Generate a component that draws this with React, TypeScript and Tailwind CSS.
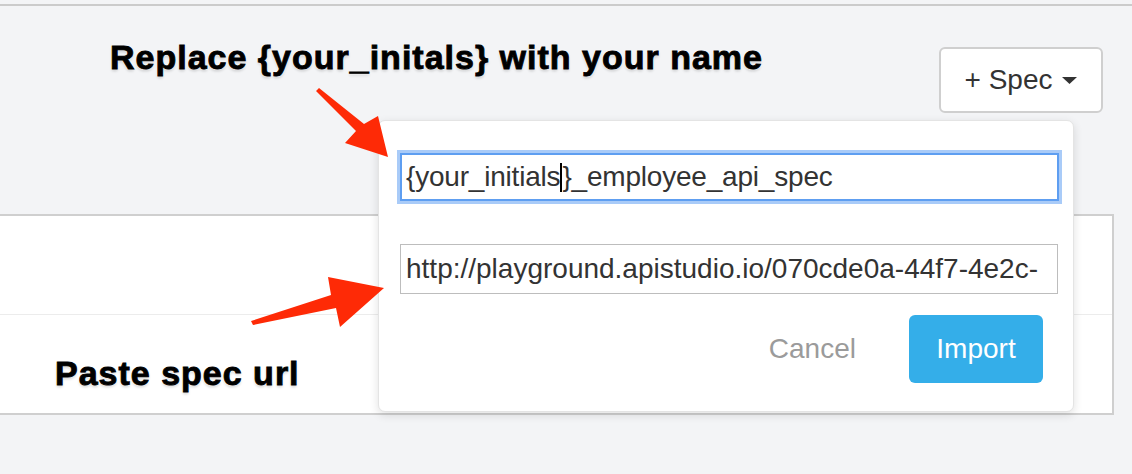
import React from "react";

export default function App() {
  return (
    <div className="relative w-[1132px] h-[474px] overflow-hidden bg-[#f3f4f6] font-['Liberation_Sans',Arial,sans-serif]">
      <div className="h-[4px]" />
      <div className="h-[2px] bg-[#cbcbcb]" />
      <div className="flex justify-end pt-[41px] pr-[29px]">
        <button className="flex h-[66px] w-[164px] items-center justify-center gap-[10px] rounded-[6px] border-2 border-[#cfcfcf] bg-white text-[28px] text-[#333]">
          <span>+ Spec</span>
          <svg width="15" height="8" viewBox="0 0 15 8" className="mt-[1px]">
            <polygon points="0,0 15,0 7.5,7" fill="#333" />
          </svg>
        </button>
      </div>
      <div className="mt-[101px] w-[1114px] border-y-2 border-r-2 border-[#cfcfcf] bg-white">
        <div className="h-[99px] border-b border-[#ececec]" />
        <div className="h-[98px]" />
      </div>

      {/* Popover */}
      <div className="absolute left-[378px] top-[120px] flex h-[292px] w-[696px] flex-col rounded-[7px] border border-[#e4e4e4] bg-white pl-[21px] pr-[16px] pt-[32px] shadow-[0_3px_10px_rgba(0,0,0,0.12)]">
        <div className="flex h-[48px] w-[659px] items-center whitespace-nowrap border-2 border-[#5e9ef1] pl-[4px] text-[28px] tracking-[-0.2px] text-[#333] ring-[3px] ring-[#a9cbf8]">
          <span>{"{your_initials"}</span>
          <span className="inline-block h-[29px] w-[2px] bg-black" />
          <span>{"}_employee_api_spec"}</span>
        </div>
        <div className="mt-[43px] flex h-[50px] w-[658px] items-center overflow-hidden whitespace-nowrap border border-[#bdbdbd] pl-[5px] text-[28px] text-[#333]">
          http://playground.apistudio.io/070cde0a-44f7-4e2c-
        </div>
        <div className="mt-[21px] flex items-center justify-end pr-[14px]">
          <span className="mr-[53px] text-[28px] text-[#9b9b9b]">Cancel</span>
          <button className="h-[68px] w-[134px] rounded-[6px] bg-[#34aee9] text-[28px] text-white">
            Import
          </button>
        </div>
      </div>

      {/* Annotation arrows */}
      <svg className="pointer-events-none absolute left-0 top-0" width="1132" height="474">
        <polygon
          points="316,91 319,88 364,124 378,116 388,157 345,143 356,131"
          fill="#fe2a06"
        />
        <polygon
          points="251,321 331,295 328,277 384,288 340,327 336,308 253,325"
          fill="#fe2a06"
        />
      </svg>

      {/* Annotation texts */}
      <div className="absolute left-[110px] top-[40px] whitespace-nowrap text-[34px] font-bold leading-none tracking-[1px] text-black [-webkit-text-stroke:0.9px_black] [text-shadow:0_0_1px_#fff,0_0_2px_#fff,0_0_3px_#fff,0_2px_3px_rgba(0,0,0,0.2)]">
        Replace {"{your_initals}"} with your name
      </div>
      <div className="absolute left-[55px] top-[356px] whitespace-nowrap text-[34px] font-bold leading-none tracking-[1px] text-black [-webkit-text-stroke:0.9px_black] [text-shadow:0_0_1px_#fff,0_0_2px_#fff,0_0_3px_#fff,0_2px_3px_rgba(0,0,0,0.2)]">
        Paste spec url
      </div>
    </div>
  );
}
